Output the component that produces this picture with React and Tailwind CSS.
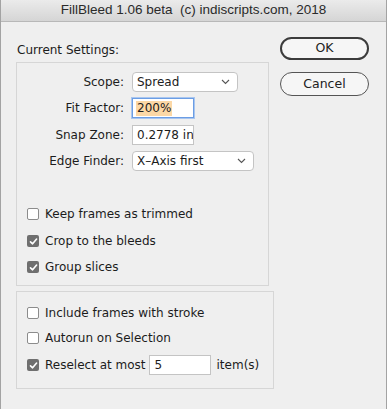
import React from "react";

function Check({ on }) {
  if (on) {
    return (
      <span className="w-[12px] h-[12px] rounded-[2px] bg-[#6f6f6f] flex items-center justify-center shrink-0">
        <svg width="9" height="9" viewBox="0 0 9 9">
          <path d="M1.5 4.8 L3.6 6.8 L7.6 2" fill="none" stroke="#fff" strokeWidth="1.6" strokeLinecap="round" strokeLinejoin="round" />
        </svg>
      </span>
    );
  }
  return <span className="w-[12px] h-[12px] rounded-[2px] bg-white border border-[#8c8c8c] shrink-0" />;
}

function CheckRow({ on, label, className, children }) {
  return (
    <div className={"flex items-center h-[20px] " + (className || "")}>
      <Check on={on} />
      <span className="ml-[6px]">{label}</span>
      {children}
    </div>
  );
}

function Chevron() {
  return (
    <svg width="9" height="6" viewBox="0 0 9 6" className="ml-auto mr-[7px]">
      <path d="M1 1 L4.5 4.5 L8 1" fill="none" stroke="#555" strokeWidth="1.1" />
    </svg>
  );
}

function Field({ label, children, className }) {
  return (
    <div className={"flex items-center h-[20px] " + (className || "")}>
      <span className="w-[108px] text-right pr-[1px]">{label}</span>
      <div className="ml-[7px] flex items-center h-full">{children}</div>
    </div>
  );
}

export default function App() {
  return (
    <div
      className="w-[387px] h-[409px] bg-[#efefef] text-[#1c1c1c] text-[12px] flex flex-col border-l border-r border-[#a3a3a3] overflow-hidden"
      style={{ fontFamily: '"DejaVu Sans", sans-serif' }}
    >
      <div
        className="h-[22px] shrink-0 bg-gradient-to-b from-[#ebebeb] to-[#d5d5d5] border-b border-[#b8b8b8] flex items-center justify-center text-[13.5px] text-[#2a2a2a]"
        style={{ fontFamily: '"Liberation Sans", Arial, sans-serif' }}
      >
        FillBleed 1.06 beta&nbsp;&nbsp;(c) indiscripts.com, 2018
      </div>

      <div className="flex">
        <div className="pl-[15px] w-[273px] shrink-0">
          <div className="h-[40px] flex items-end pl-[1px] pb-[3px]">Current Settings:</div>

          <div className="border border-[#d6d6d6] w-[253px] pt-[9px] pb-[8px]">
            <Field label="Scope:">
              <div className="w-[106px] h-[20px] bg-white border border-[#c4c4c4] rounded-[4px] flex items-center pl-[4px]">
                Spread
                <Chevron />
              </div>
            </Field>
            <Field label="Fit Factor:" className="mt-[6px]">
              <div className="w-[62px] h-[20px] bg-white border border-[#6b9de4] shadow-[0_0_0_1px_#a9c6ef] flex items-center pl-[3px]">
                <span className="bg-[#fcd8a6] px-[1px] leading-[15px]">200%</span>
              </div>
            </Field>
            <Field label="Snap Zone:" className="mt-[7px]">
              <div className="w-[62px] h-[20px] bg-white border border-[#c4c4c4] flex items-center pl-[4px] overflow-hidden whitespace-nowrap">
                0.2778 in
              </div>
            </Field>
            <Field label="Edge Finder:" className="mt-[6px]">
              <div className="w-[122px] h-[20px] bg-white border border-[#c4c4c4] rounded-[4px] flex items-center pl-[4px]">
                X–Axis first
                <Chevron />
              </div>
            </Field>

            <div className="pl-[10px]">
              <CheckRow on={false} label="Keep frames as trimmed" className="mt-[33px]" />
              <CheckRow on={true} label="Crop to the bleeds" className="mt-[7px]" />
              <CheckRow on={true} label="Group slices" className="mt-[6px]" />
            </div>
          </div>

          <div className="border border-[#d6d6d6] w-[258px] mt-[5px] pt-[11px] pb-[13px] pl-[10px]">
            <CheckRow on={false} label="Include frames with stroke" />
            <CheckRow on={false} label="Autorun on Selection" className="mt-[5px]" />
            <CheckRow on={true} label="Reselect at most" className="mt-[7px]">
              <div className="ml-[3px] w-[62px] h-[20px] bg-white border border-[#c4c4c4] flex items-center pl-[5px]">5</div>
              <span className="ml-[6px]">item(s)</span>
            </CheckRow>
          </div>
        </div>

        <div className="flex flex-col pl-[6px] pt-[15px]">
          <button className="w-[89px] h-[23px] rounded-full border-2 border-[#3c3c3c] bg-[#f6f6f6] text-[12.5px] text-[#222] flex items-center justify-center">
            OK
          </button>
          <button className="w-[89px] h-[24px] mt-[12px] rounded-full border border-[#555] bg-[#f6f6f6] text-[12.5px] text-[#222] flex items-center justify-center">
            Cancel
          </button>
        </div>
      </div>
    </div>
  );
}
